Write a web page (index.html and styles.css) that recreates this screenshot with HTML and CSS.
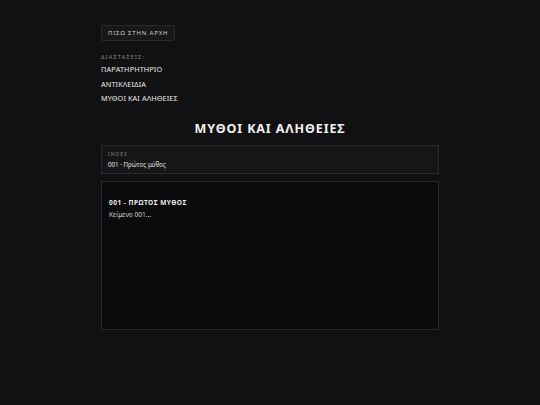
FILE: index.html
```html
<!DOCTYPE html>
<html lang="el">
<head>
<meta charset="utf-8">
<link rel="stylesheet" href="styles.css">
</head>
<body>
<div class="wrap">
  <a class="back">ΠΙΣΩ ΣΤΗΝ ΑΡΧΗ</a>
  <div class="dims">
    <div class="dims-label">ΔΙΑΣΤΑΣΕΙΣ:</div>
    <a class="dim">ΠΑΡΑΤΗΡΗΤΗΡΙΟ</a>
    <a class="dim">ΑΝΤΙΚΛΕΙΔΙΑ</a>
    <a class="dim">ΜΥΘΟΙ ΚΑΙ ΑΛΗΘΕΙΕΣ</a>
  </div>
  <h1 class="title">ΜΥΘΟΙ ΚΑΙ ΑΛΗΘΕΙΕΣ</h1>
  <div class="index">
    <div class="index-label">INDEX</div>
    <div class="index-item">001 · Πρώτος μύθος</div>
  </div>
  <div class="content">
    <div class="content-title">001 - ΠΡΩΤΟΣ ΜΥΘΟΣ</div>
    <div class="content-text">Κείμενο 001...</div>
  </div>
</div>
</body>
</html>
```
FILE: styles.css
```css
html, body {
  margin: 0;
  padding: 0;
  background: #111113;
  color: #e6e6e6;
  font-family: "Noto Sans", "Open Sans", sans-serif;
}
.wrap {
  width: 338px;
  margin: 0 auto;
  padding-top: 25px;
  display: flex;
  flex-direction: column;
  align-items: stretch;
}
.back {
  align-self: flex-start;
  box-sizing: border-box;
  height: 16px;
  padding: 0 6px;
  display: flex;
  align-items: center;
  border: 1px solid #2a2a2d;
  border-radius: 2px;
  background: #18181a;
  color: #cfcfcf;
  font-size: 6px;
  letter-spacing: 0.85px;
}
.dims {
  margin-top: 11px;
  display: flex;
  flex-direction: column;
}
.dims-label {
  font-size: 5.5px;
  letter-spacing: 1.2px;
  color: #8a8a8e;
  line-height: 10px;
}
.dim {
  font-size: 7.3px;
  line-height: 14.5px;
  color: #ececec;
  letter-spacing: 0.1px;
}
.title {
  margin: 15px 0 0;
  text-align: center;
  font-size: 12.5px;
  font-weight: 700;
  letter-spacing: 0.9px;
  line-height: 16px;
  color: #f0f0f0;
}
.index {
  margin-top: 8px;
  box-sizing: border-box;
  height: 29px;
  padding: 4px 6px 0;
  border: 1px solid #2a2a2d;
  background: #161618;
}
.index-label {
  font-size: 5px;
  letter-spacing: 1px;
  color: #808084;
  line-height: 8px;
}
.index-item {
  margin-top: 2px;
  font-size: 6.2px;
  line-height: 10px;
  color: #e0e0e0;
}
.content {
  margin-top: 7px;
  box-sizing: border-box;
  height: 149px;
  padding: 16px 7px 0;
  border: 1px solid #2a2a2d;
  background: #0b0b0d;
}
.content-title {
  font-size: 6.5px;
  font-weight: 700;
  letter-spacing: 0.5px;
  line-height: 10px;
  color: #ececec;
}
.content-text {
  margin-top: 2px;
  font-size: 6.6px;
  line-height: 10px;
  color: #d0d0d0;
}
```
